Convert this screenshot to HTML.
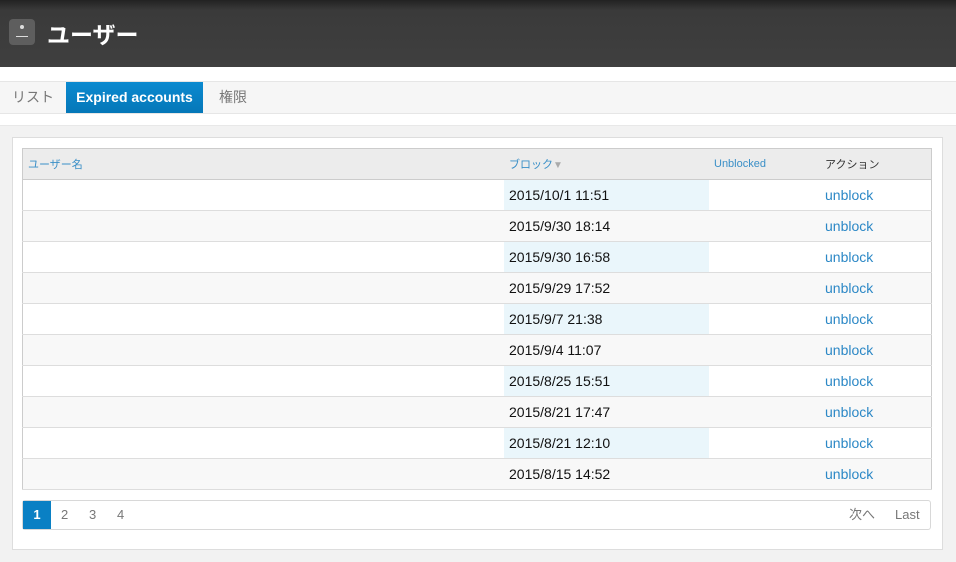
<!DOCTYPE html><html><head><meta charset="utf-8"><style>
body{margin:0;width:956px;height:561px;background:#fff;font-family:"Liberation Sans","Noto Sans CJK JP",sans-serif;position:relative;overflow:hidden}
.hd{position:absolute;left:0;top:0;width:956px;height:67px;background:linear-gradient(#222,#3a3a3a 15%,#3f3f3f)}
.ic{position:absolute;left:9px;top:19px;width:26px;height:26px;background:#5e5e5e;border-radius:4px}
.ic:before{content:"";position:absolute;left:11px;top:6px;width:4px;height:4px;border-radius:2px;background:#ddd}
.ic:after{content:"";position:absolute;left:7px;top:17px;width:12px;height:1px;background:#ddd}
.tt{position:absolute;left:47px;top:16px;color:#fff;font-size:23px;font-weight:bold}
.tabs{position:absolute;left:0;top:81px;width:956px;height:31px;background:#f6f6f6;border-top:1px solid #e6e6e6;border-bottom:1px solid #e6e6e6;font-size:14px;color:#777}
.tabs span{position:absolute;top:0;line-height:31px}
.act{left:66px;width:137px;text-align:center;background:linear-gradient(#0b8ad0,#0577b8);color:#fff;font-weight:bold}
.outer{position:absolute;left:0;top:125px;width:956px;height:436px;background:#f2f2f2;border-top:1px solid #e8e8e8}
.panel{position:absolute;left:12px;top:137px;width:929px;height:411px;background:#fff;border:1px solid #ddd}
table{position:absolute;left:22px;top:148px;width:910px;border-collapse:collapse;font-size:14px;border:1px solid #ccc}
th{height:30px;background:#ececec;text-align:left;font-weight:normal;font-size:11px;color:#3a8fc7;padding:0 0 0 5px;border-bottom:1px solid #ccc}
td{height:30px;border-bottom:1px solid #ddd;padding:0 0 0 5px;color:#111}
tr:nth-child(odd) td{background:#f8f8f8}
tr:nth-child(even) td.b{background:#eaf6fb}
td.a{color:#2c88c6}
.pg{position:absolute;left:22px;top:500px;width:907px;height:28px;border:1px solid #d8d8d8;border-radius:3px;font-size:13px;color:#777;background:#fff}
.pg span{position:absolute;top:0;line-height:28px}
</style></head><body>
<div class="hd"><div class="ic"></div><div class="tt">ユーザー</div></div>
<div class="tabs"><span style="left:12px">リスト</span><span class="act">Expired accounts</span><span style="left:219px">権限</span></div>
<div class="outer"></div>
<div class="panel"></div>
<table>
<tr><th style="width:476px">ユーザー名</th><th style="width:200px">ブロック<span style="color:#aaa;font-size:10px">▼</span></th><th style="width:106px">Unblocked</th><th style="color:#333">アクション</th></tr>
<tr><td></td><td class="b">2015/10/1 11:51</td><td></td><td class="a">unblock</td></tr>
<tr><td></td><td class="b">2015/9/30 18:14</td><td></td><td class="a">unblock</td></tr>
<tr><td></td><td class="b">2015/9/30 16:58</td><td></td><td class="a">unblock</td></tr>
<tr><td></td><td class="b">2015/9/29 17:52</td><td></td><td class="a">unblock</td></tr>
<tr><td></td><td class="b">2015/9/7 21:38</td><td></td><td class="a">unblock</td></tr>
<tr><td></td><td class="b">2015/9/4 11:07</td><td></td><td class="a">unblock</td></tr>
<tr><td></td><td class="b">2015/8/25 15:51</td><td></td><td class="a">unblock</td></tr>
<tr><td></td><td class="b">2015/8/21 17:47</td><td></td><td class="a">unblock</td></tr>
<tr><td></td><td class="b">2015/8/21 12:10</td><td></td><td class="a">unblock</td></tr>
<tr><td></td><td class="b">2015/8/15 14:52</td><td></td><td class="a">unblock</td></tr>
</table>
<div class="pg"><span style="left:0;width:28px;text-align:center;background:#0a80c4;color:#fff;font-weight:bold">1</span><span style="left:38px">2</span><span style="left:66px">3</span><span style="left:94px">4</span><span style="left:826px">次へ</span><span style="left:872px">Last</span></div>
</body></html>
